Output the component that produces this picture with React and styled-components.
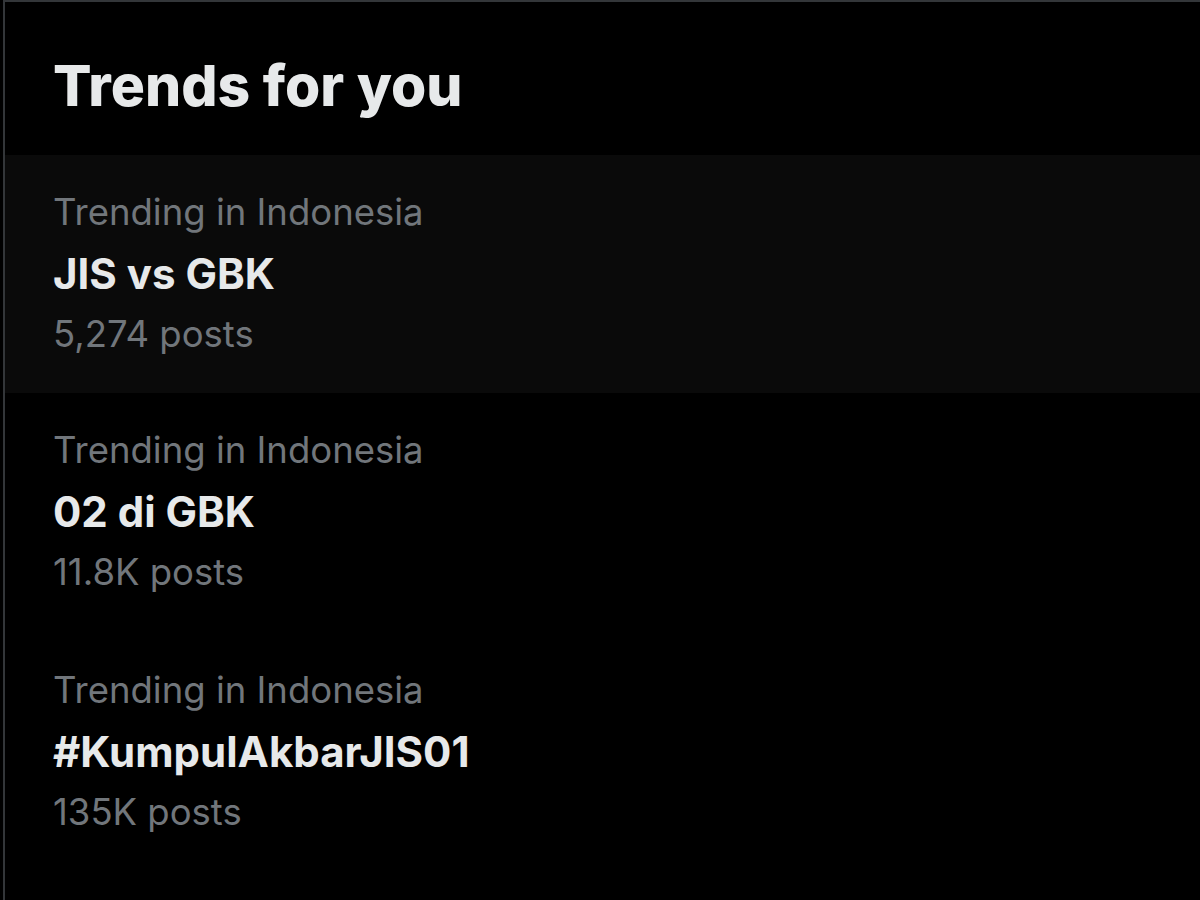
import React from 'react'
import styled, { createGlobalStyle } from 'styled-components'

const trends = [
    { place: 'Trending in Indonesia', name: 'JIS vs GBK', posts: '5,274 posts', active: true },
    { place: 'Trending in Indonesia', name: '02 di GBK', posts: '11.8K posts' },
    { place: 'Trending in Indonesia', name: '#KumpulAkbarJIS01', posts: '135K posts' },
]

const App = () => {
    return(
        <>
            <GlobalStyle />
            <Panel>
                <Header>Trends for you</Header>
                {trends.map((t, i) => (
                    <TrendRow key={i} $active={t.active}>
                        <Meta>{t.place}</Meta>
                        <TrendName>{t.name}</TrendName>
                        <Meta>{t.posts}</Meta>
                    </TrendRow>
                ))}
            </Panel>
        </>
    )
}

export default App



//GLOBAL
const GlobalStyle = createGlobalStyle`
    html, body{
        margin: 0;
        padding: 0;
        background: #000;
        overflow: hidden;
    }
    body{
        font-family: Inter, "Noto Sans", sans-serif;
        -webkit-font-smoothing: antialiased;
    }
`;



//PANEL
const Panel = styled.div`
    margin-left: 3px;
    height: 900px;
    background: #000;
    border-top: 2px solid #333639;
    border-left: 2px solid #333639;
    box-sizing: border-box;
`;



//HEADER
const Header = styled.h2`
    margin: 0;
    padding: 50px 48px 35px;
    font-size: 57px;
    font-weight: 800;
    line-height: 68px;
    color: #e7e9ea;
`;



//TREND ROW
const TrendRow = styled.div`
    display: flex;
    flex-direction: column;
    height: 238px;
    padding: 27px 48px 0;
    box-sizing: border-box;
    background: ${p => p.$active ? '#0a0a0a' : 'transparent'};
    & + & {
        height: 240px;
    }
`;

const Meta = styled.span`
    font-size: 36.5px;
    font-weight: 400;
    line-height: 61px;
    color: #71767b;
`;

const TrendName = styled.span`
    font-size: 42px;
    font-weight: 700;
    line-height: 61px;
    color: #e7e9ea;
`;
